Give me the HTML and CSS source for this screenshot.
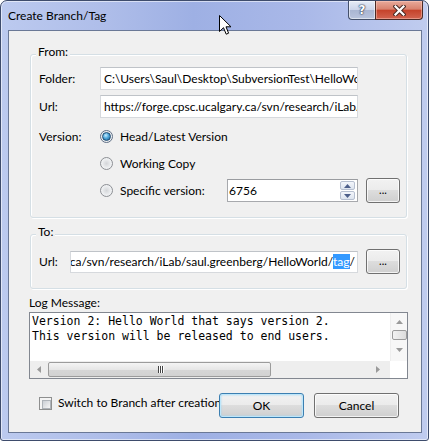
FILE: index.html
```html
<!DOCTYPE html>
<html>
<head>
<meta charset="utf-8">
<title>Create Branch/Tag</title>
<link rel="stylesheet" href="styles.css">
</head>
<body>
<div class="window">
  <div class="titlebar">
    <span class="title">Create Branch/Tag</span>
    <div class="caption">
      <div class="cap-btn help"><span>?</span></div>
      <div class="cap-btn close">
        <svg width="13" height="11" viewBox="0 0 13 11"><path d="M2.5 1.5 L10.5 9.5 M10.5 1.5 L2.5 9.5" stroke="#4a2a24" stroke-width="4.2" stroke-linecap="square" fill="none"/><path d="M2.5 1.5 L10.5 9.5 M10.5 1.5 L2.5 9.5" stroke="#ffffff" stroke-width="2.2" stroke-linecap="square" fill="none"/></svg>
      </div>
    </div>
  </div>

  <div class="client">
    <div class="group group-from">
      <span class="legend">From:</span>
      <div class="form-grid">
        <span class="lbl">Folder:</span>
        <div class="field ro"><span class="field-text">C:\Users\Saul\Desktop\SubversionTest\HelloWorld</span></div>
        <span class="lbl">Url:</span>
        <div class="field ro"><span class="field-text">https://forge.cpsc.ucalgary.ca/svn/research/iLab/saul.greenberg/HelloWorld/trunk</span></div>
        <span class="lbl lbl-version">Version:</span>
        <div class="radios">
          <div class="radio-row"><span class="radio on"></span><span class="radio-text">Head/Latest Version</span></div>
          <div class="radio-row"><span class="radio"></span><span class="radio-text">Working Copy</span></div>
          <div class="radio-row">
            <span class="radio"></span><span class="radio-text">Specific version:</span>
            <div class="spin">
              <span class="spin-val">6756</span>
              <div class="spin-btns">
                <span class="spin-btn"><svg width="7" height="4" viewBox="0 0 7 4"><path d="M0 4 L3.5 0 L7 4 Z" fill="#4d5f8a"/></svg></span>
                <span class="spin-btn"><svg width="7" height="4" viewBox="0 0 7 4"><path d="M0 0 L7 0 L3.5 4 Z" fill="#4d5f8a"/></svg></span>
              </div>
            </div>
            <div class="btn dots">...</div>
          </div>
        </div>
      </div>
    </div>

    <div class="group group-to">
      <span class="legend">To:</span>
      <div class="to-row">
        <span class="lbl">Url:</span>
        <div class="field to-field"><span class="field-text">https://forge.cpsc.ucalgary.ca/svn/research/iLab/saul.greenberg/HelloWorld/<span class="sel">tag</span>/</span></div>
        <div class="btn dots">...</div>
      </div>
    </div>

    <div class="log-label">Log Message:</div>
    <div class="log">
      <div class="log-text">Version 2: Hello World that says version 2.
This version will be released to end users.</div>
      <div class="vscroll">
        <svg class="arrow" width="7" height="4" viewBox="0 0 7 4"><path d="M0 4 L3.5 0 L7 4 Z" fill="#9a9a9a"/></svg>
        <span class="vthumb"></span>
        <svg class="arrow down" width="7" height="4" viewBox="0 0 7 4"><path d="M0 0 L7 0 L3.5 4 Z" fill="#9a9a9a"/></svg>
      </div>
      <div class="hscroll">
        <svg class="harrow" width="4" height="7" viewBox="0 0 4 7"><path d="M4 0 L4 7 L0 3.5 Z" fill="#9a9a9a"/></svg>
        <span class="hthumb"><span class="grip"><i></i><i></i><i></i></span></span>
        <svg class="harrow right" width="4" height="7" viewBox="0 0 4 7"><path d="M0 0 L4 3.5 L0 7 Z" fill="#9a9a9a"/></svg>
      </div>
      <div class="corner"></div>
    </div>

    <div class="bottom-row">
      <div class="check-wrap"><span class="checkbox"></span><span class="check-text">Switch to Branch after creation</span></div>
      <div class="btn action default">OK</div>
      <div class="btn action">Cancel</div>
    </div>
  </div>

  <svg class="cursor" width="13" height="21" viewBox="0 0 13 21"><path d="M0.5 0.5 L0.5 16.5 L4.5 12.7 L7.2 19.2 L9.6 18.2 L7 11.8 L12 11.8 Z" fill="#ffffff" stroke="#000000" stroke-width="1" stroke-linejoin="miter"/></svg>
</div>
</body>
</html>
```

FILE: styles.css
```css
* { box-sizing: border-box; }
html, body { margin: 0; padding: 0; }
body {
  width: 429px;
  height: 441px;
  overflow: hidden;
  background: #ffffff;
  font-family: "Lato", "Noto Sans", sans-serif;
  font-size: 12px;
  color: #000;
}

.window {
  position: relative;
  width: 429px;
  height: 441px;
  border: 1px solid #3e4c6c;
  border-radius: 7px 7px 3px 3px;
  background: linear-gradient(90deg, #bccaef 0%, #aebde9 25%, #9eb0e4 45%, #a9b8e8 70%, #c0ccef 100%);
  box-shadow: inset 0 0 0 1px rgba(255,255,255,0.55);
  display: flex;
  flex-direction: column;
  overflow: hidden;
}

.titlebar {
  height: 29px;
  display: flex;
  align-items: flex-start;
  flex-shrink: 0;
}
.title {
  padding: 7px 0 0 7px;
  line-height: 16px;
  font-size: 12px;
  color: #000;
}
.caption {
  margin-left: auto;
  margin-right: 5px;
  display: flex;
}
.cap-btn {
  height: 19px;
  display: flex;
  align-items: center;
  justify-content: center;
  border: 1px solid #44506a;
  border-top: none;
}
.help {
  width: 27px;
  border-radius: 0 0 0 4px;
  border-right: none;
  background: linear-gradient(#e6ebf6 0%, #ccd5ea 48%, #aab6d2 52%, #b9c4dd 100%);
  box-shadow: inset 0 0 0 1px rgba(255,255,255,0.5);
}
.help span {
  font-family: "DejaVu Sans", sans-serif;
  font-weight: bold;
  font-size: 12px;
  line-height: 12px;
  color: #fff;
  text-shadow: 0 0 1px #2f3a55, 0 0 1px #2f3a55, 0 0 2px #2f3a55;
}
.close {
  width: 48px;
  border-radius: 0 0 4px 0;
  border-color: #4b2a25;
  background: linear-gradient(#e8aa9b 0%, #d8826e 45%, #c5432b 52%, #d26450 100%);
  box-shadow: inset 0 0 0 1px rgba(255,210,200,0.45);
}

.client {
  margin: 0 6px 7px 7px;
  height: 403px;
  border: 1px solid #6a7896;
  background: #f0f0f0;
  display: flex;
  flex-direction: column;
  align-items: flex-start;
}

.group {
  position: relative;
  width: 377px;
  margin-left: 21px;
  border: 1px solid #d5dfe5;
  border-radius: 3px;
  box-shadow: inset 1px 1px 0 #ffffff, 1px 1px 0 #ffffff;
}
.group-from {
  margin-top: 23px;
  padding: 12px 6px 13px 8px;
}
.group-to {
  margin-top: 16px;
  padding: 14px 6px 14px 8px;
}
.legend {
  position: absolute;
  top: -11px;
  left: 5px;
  padding: 0 2px;
  line-height: 16px;
  background: #f0f0f0;
}

.form-grid {
  display: grid;
  grid-template-columns: 61px 300px;
  grid-template-rows: 23px 23px auto;
  row-gap: 5px;
}
.lbl {
  display: flex;
  align-items: center;
  line-height: 16px;
}
.lbl-version {
  height: 27px;
  align-self: start;
}

.field {
  height: 23px;
  width: 258px;
  border: 1px solid #d6d9dd;
  border-top-color: #bfc3c8;
  background: #ffffff;
  display: flex;
  align-items: center;
  overflow: hidden;
  padding: 0 3px;
}
.field-text {
  white-space: nowrap;
  line-height: 16px;
}

.radios {
  display: flex;
  flex-direction: column;
}
.radio-row {
  height: 27px;
  display: flex;
  align-items: center;
}
.radio {
  width: 13px;
  height: 13px;
  border-radius: 50%;
  border: 1px solid #8c8f94;
  background: radial-gradient(circle at 50% 50%, #d4d6d9 0%, #eceef0 55%, #f8f8f8 100%);
  display: flex;
  align-items: center;
  justify-content: center;
  flex-shrink: 0;
}
.radio.on {
  border-color: #5f6f86;
}
.radio.on::after {
  content: "";
  width: 7px;
  height: 7px;
  border-radius: 50%;
  border: 1px solid #1c4a72;
  background: radial-gradient(circle at 40% 35%, #c6ecff 0%, #4fa7da 45%, #135b91 100%);
}
.radio-text {
  margin-left: 7px;
  line-height: 16px;
  white-space: nowrap;
}

.spin {
  margin-left: auto;
  width: 131px;
  height: 23px;
  border: 1px solid #a7a9ad;
  border-top-color: #9a9ca0;
  background: #ffffff;
  display: flex;
  align-items: center;
  padding: 0 1px 0 1px;
}
.spin-val {
  flex: 1;
  line-height: 16px;
}
.spin-btns {
  display: flex;
  flex-direction: column;
  gap: 1px;
  margin-right: 1px;
}
.spin-btn {
  width: 15px;
  height: 9px;
  border: 1px solid #b6bfd0;
  border-radius: 2px;
  background: linear-gradient(#f3f6fb, #dde4ef);
  display: flex;
  align-items: center;
  justify-content: center;
}

.btn {
  height: 25px;
  border: 1px solid #707070;
  border-radius: 3px;
  background: linear-gradient(#f2f2f2 0%, #ebebeb 49%, #dddddd 50%, #cfcfcf 100%);
  box-shadow: inset 0 0 0 1px rgba(255,255,255,0.75);
  display: flex;
  align-items: center;
  justify-content: center;
  line-height: 16px;
  flex-shrink: 0;
}
.dots {
  width: 34px;
  margin-left: 8px;
  font-size: 11px;
  padding-bottom: 2px;
}

.to-row {
  display: flex;
  align-items: center;
  height: 25px;
}
.to-row .lbl {
  width: 31px;
}
.to-field {
  width: 288px;
  height: 22px;
  justify-content: flex-end;
  padding: 0 2px 0 0;
}
.sel {
  background: #3399ff;
  color: #ffffff;
}

.log-label {
  margin: 6px 0 0 20px;
  line-height: 16px;
}
.log {
  margin: 1px 0 0 20px;
  width: 379px;
  height: 67px;
  border: 1px solid #828790;
  background: #ffffff;
  display: grid;
  grid-template-columns: 360px 17px;
  grid-template-rows: 48px 17px;
}
.log-text {
  font-family: "DejaVu Sans Mono", "Liberation Mono", monospace;
  font-size: 11.5px;
  line-height: 15px;
  white-space: pre;
  padding: 1px 0 0 2px;
  overflow: hidden;
}
.vscroll {
  background: #f7f7f7;
  border-left: 1px solid #eeeeee;
  display: flex;
  flex-direction: column;
  align-items: center;
  padding-top: 7px;
}
.vthumb {
  margin-top: 6px;
  width: 15px;
  height: 10px;
  border: 1px solid #9b9b9b;
  border-radius: 2px;
  background: linear-gradient(90deg, #f2f2f2, #dcdcdc);
}
.arrow.down {
  margin-top: 8px;
}
.hscroll {
  background: #eeeeee;
  display: flex;
  align-items: center;
  padding-left: 7px;
}
.hthumb {
  margin-left: 7px;
  width: 223px;
  height: 15px;
  border: 1px solid #9b9b9b;
  border-radius: 2px;
  background: linear-gradient(#f4f4f4 0%, #e6e6e6 50%, #d6d6d6 51%, #d2d2d2 100%);
  display: flex;
  align-items: center;
  justify-content: center;
}
.grip {
  display: flex;
  gap: 1px;
  margin-left: 1px;
}
.grip i {
  display: block;
  width: 1px;
  height: 7px;
  background: #444444;
  box-shadow: 1px 0 0 #ffffff;
}
.harrow.right {
  margin-left: 105px;
}
.corner {
  background: #ffffff;
}

.bottom-row {
  margin-top: 14px;
  width: 100%;
  display: flex;
  align-items: flex-start;
  padding: 0 22px 0 30px;
}
.check-wrap {
  width: 180px;
  display: flex;
  align-items: center;
  margin-top: 2px;
  white-space: nowrap;
}
.checkbox {
  width: 13px;
  height: 13px;
  border: 1px solid #8e8f8f;
  background: #f4f4f4;
  padding: 2px;
  flex-shrink: 0;
  position: relative;
}
.checkbox::after {
  content: "";
  display: block;
  width: 7px;
  height: 7px;
  border: 1px solid #aeb3b9;
  background: linear-gradient(135deg, #cbcfd5, #f6f6f6);
}
.check-text {
  margin-left: 6px;
  line-height: 16px;
}
.action {
  width: 85px;
}
.action.default {
  border-color: #3c7fb1;
  box-shadow: inset 0 0 0 1px #bde6fa, inset 0 0 2px 1px #9dd5f3;
}
.action + .action {
  margin-left: 10px;
}

.cursor {
  position: absolute;
  left: 218px;
  top: 14px;
}
```
